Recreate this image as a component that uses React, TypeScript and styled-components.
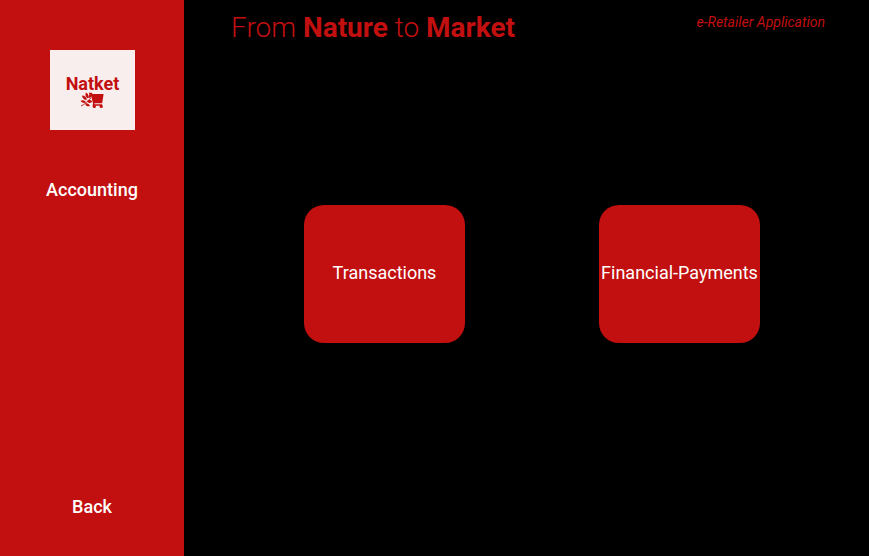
import React from "react";
import styled, { createGlobalStyle } from "styled-components";

const red = "#c20f0f";
const blush = "#f9eeee";

const GlobalStyle = createGlobalStyle`
  * { box-sizing: border-box; }
  body {
    margin: 0;
    background: #000;
    font-family: Roboto, "Liberation Sans", sans-serif;
  }
`;

const Page = styled.div`
  display: flex;
  min-height: 100vh;
  background: #000;
`;

const Sidebar = styled.aside`
  display: flex;
  flex-direction: column;
  align-items: center;
  flex: 0 0 184px;
  padding: 50px 0 37px;
  background: ${red};
  color: #fff;
`;

const LogoTile = styled.div`
  display: flex;
  flex-direction: column;
  align-items: center;
  width: 85px;
  height: 80px;
  margin-left: 1px;
  padding-top: 24px;
  background: ${blush};
  color: ${red};
`;

const LogoName = styled.span`
  font-size: 18px;
  font-weight: 700;
  line-height: 20px;
`;

const LogoMark = styled.svg`
  display: block;
  width: 25px;
  height: 16px;
  margin-top: -2px;
`;

const SectionTitle = styled.h2`
  margin: 48px 0 0;
  font-size: 18px;
  font-weight: 500;
  line-height: 24px;
`;

const BackButton = styled.button`
  margin-top: auto;
  padding: 0;
  border: 0;
  background: none;
  color: #fff;
  font: 500 18px/24px Roboto, "Liberation Sans", sans-serif;
  cursor: pointer;
`;

const Main = styled.main`
  display: flex;
  flex: 1;
  flex-direction: column;
  min-width: 0;
`;

const Header = styled.header`
  display: flex;
  align-items: flex-start;
  justify-content: space-between;
  padding: 10px 44px 8px 47px;
  color: ${red};
`;

const Slogan = styled.h1`
  margin: 0;
  font-size: 28px;
  font-weight: 300;
  line-height: 36px;

  strong { font-weight: 700; }
`;

const AppName = styled.span`
  padding-top: 2px;
  font-size: 14px;
  font-style: italic;
  font-weight: 400;
  line-height: 20px;
`;

const Choices = styled.nav`
  display: flex;
  flex: 1;
  align-items: center;
  justify-content: center;
  gap: 134px;
  padding: 0 0 62px 11px;
`;

const ChoiceButton = styled.button`
  width: 161px;
  height: 138px;
  padding: 0 0 2px;
  border: 0;
  border-radius: 20px;
  background: ${red};
  color: #fff;
  font: 400 18px/24px Roboto, "Liberation Sans", sans-serif;
  white-space: nowrap;
  cursor: pointer;
`;

const choices = ["Transactions", "Financial-Payments"];

function NatketMark() {
  return (
    <LogoMark viewBox="0 0 25 16" fill="currentColor" aria-hidden="true">
      <path
        d="M1 14C4 13 7 9.5 11 6"
        fill="none"
        stroke="currentColor"
        strokeWidth="0.9"
      />
      <path d="M2 3.6C5 3.6 6.6 5.2 6.8 8.1C4 8 2.3 6.4 2 3.6Z" />
      <path d="M6 0.6C8.4 1.8 9 4.2 7.8 6.6C5.5 5.2 4.8 2.8 6 0.6Z" />
      <path d="M8.2 6C8.2 3.4 9.4 2.2 11.6 1.8C12.2 4.6 11 6 8.2 6Z" />
      <path d="M0.6 8.8C2.8 7.6 4.9 8.3 6 10.2C4 11.6 1.8 11 0.6 8.8Z" />
      <path d="M7 9.2C9 7.2 11.2 7.7 12.4 9.6C10.6 11.7 8.4 11.4 7 9.2Z" />
      <path d="M5 11.4C7.2 10.6 9.2 11.6 10 14C7.6 14.8 5.8 13.8 5 11.4Z" />
      <path d="M9 0.7H11.8L12.6 2H23.6L22.2 11.2H13L10.8 2.6H9Z" />
      <path
        d="M14 10.5L13.4 13H22.2"
        fill="none"
        stroke="currentColor"
        strokeWidth="1.4"
      />
      <circle cx="14.3" cy="14.4" r="1.6" />
      <circle cx="21.2" cy="14.4" r="1.6" />
    </LogoMark>
  );
}

export default function App() {
  return (
    <>
      <GlobalStyle />
      <Page>
        <Sidebar>
          <LogoTile>
            <LogoName>Natket</LogoName>
            <NatketMark />
          </LogoTile>
          <SectionTitle>Accounting</SectionTitle>
          <BackButton type="button">Back</BackButton>
        </Sidebar>
        <Main>
          <Header>
            <Slogan>
              From <strong>Nature</strong> to <strong>Market</strong>
            </Slogan>
            <AppName>e-Retailer Application</AppName>
          </Header>
          <Choices aria-label="Accounting">
            {choices.map((label) => (
              <ChoiceButton type="button" key={label}>
                {label}
              </ChoiceButton>
            ))}
          </Choices>
        </Main>
      </Page>
    </>
  );
}
